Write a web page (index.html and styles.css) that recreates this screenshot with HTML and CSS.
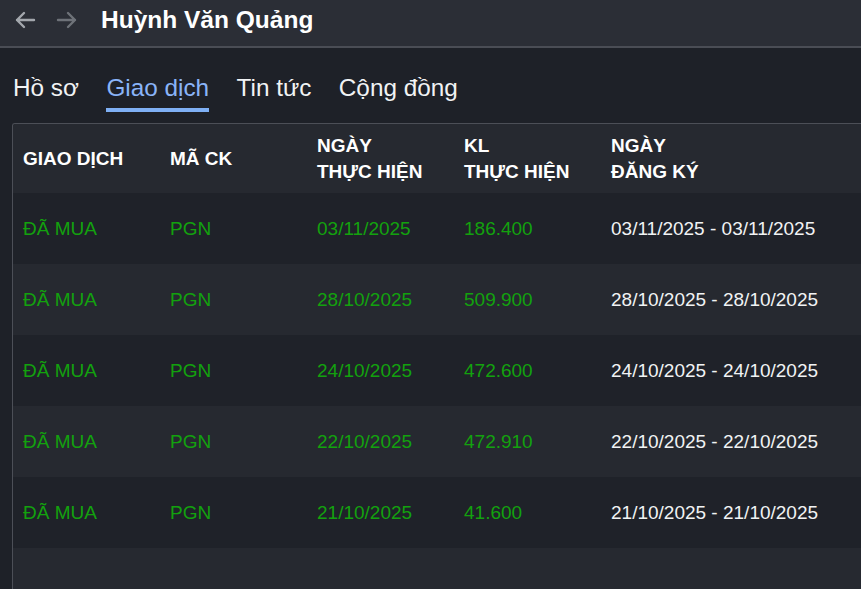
FILE: index.html
```html
<!DOCTYPE html>
<html lang="vi">
<head>
<meta charset="utf-8">
<title>Huỳnh Văn Quảng</title>
<link rel="stylesheet" href="styles.css">
</head>
<body>
<header class="topbar">
  <button class="nav-btn back" aria-label="Quay lại">
    <svg width="22" height="18" viewBox="0 0 22 18"><path d="M20 9H3M10 2L3 9l7 7" fill="none" stroke="currentColor" stroke-width="2.4" stroke-linecap="round" stroke-linejoin="round"/></svg>
  </button>
  <button class="nav-btn fwd" aria-label="Tiếp">
    <svg width="22" height="18" viewBox="0 0 22 18"><path d="M2 9h17M12 2l7 7-7 7" fill="none" stroke="currentColor" stroke-width="2.4" stroke-linecap="round" stroke-linejoin="round"/></svg>
  </button>
  <h1 class="title">Huỳnh Văn Quảng</h1>
</header>
<nav class="tabs">
  <a class="tab">Hồ sơ</a>
  <a class="tab active">Giao dịch</a>
  <a class="tab">Tin tức</a>
  <a class="tab">Cộng đồng</a>
</nav>
<section class="table-wrap">
  <table class="trades">
    <thead>
      <tr>
        <th>GIAO DỊCH</th>
        <th>MÃ CK</th>
        <th>NGÀY<br>THỰC HIỆN</th>
        <th>KL<br>THỰC HIỆN</th>
        <th>NGÀY<br>ĐĂNG KÝ</th>
      </tr>
    </thead>
    <tbody>
      <tr><td class="g">ĐÃ MUA</td><td class="g">PGN</td><td class="g">03/11/2025</td><td class="g">186.400</td><td>03/11/2025 - 03/11/2025</td></tr>
      <tr><td class="g">ĐÃ MUA</td><td class="g">PGN</td><td class="g">28/10/2025</td><td class="g">509.900</td><td>28/10/2025 - 28/10/2025</td></tr>
      <tr><td class="g">ĐÃ MUA</td><td class="g">PGN</td><td class="g">24/10/2025</td><td class="g">472.600</td><td>24/10/2025 - 24/10/2025</td></tr>
      <tr><td class="g">ĐÃ MUA</td><td class="g">PGN</td><td class="g">22/10/2025</td><td class="g">472.910</td><td>22/10/2025 - 22/10/2025</td></tr>
      <tr><td class="g">ĐÃ MUA</td><td class="g">PGN</td><td class="g">21/10/2025</td><td class="g">41.600</td><td>21/10/2025 - 21/10/2025</td></tr>
    </tbody>
  </table>
</section>
</body>
</html>
```
FILE: styles.css
```css
html, body {
  margin: 0;
  padding: 0;
  height: 100%;
  overflow: hidden;
}
body {
  background: #1e2128;
  color: #f1f3f4;
  font-family: "Liberation Sans", Arial, sans-serif;
  display: flex;
  flex-direction: column;
}
.topbar {
  height: 46px;
  flex: none;
  background: #2b2e36;
  border-bottom: 2px solid #4a4d55;
  display: flex;
  align-items: center;
  padding-left: 14px;
}
.nav-btn {
  background: none;
  border: 0;
  padding: 0;
  width: 22px;
  height: 18px;
  display: flex;
  margin-right: 20px;
  margin-top: -6px;
}
.nav-btn.back { color: #a3a7ad; }
.nav-btn.fwd { color: #6e7279; }
.title {
  margin: -6px 0 0 3px;
  font-size: 24.5px;
  font-weight: bold;
  color: #ffffff;
}
.tabs {
  flex: none;
  display: flex;
  gap: 27.5px;
  padding: 26px 13px 0;
  height: 49px;
}
.tab {
  font-size: 24.3px;
  color: #f1f3f4;
  line-height: 28px;
  height: 34px;
  border-bottom: 4px solid transparent;
}
.tab.active {
  color: #8ab4f8;
  border-bottom-color: #7fb0f5;
}
.table-wrap {
  flex: 1;
  margin-left: 12px;
  border-left: 1px solid #4c4f57;
  border-top: 1px solid #4c4f57;
  border-top-left-radius: 3px;
  background: #262930;
  overflow: hidden;
}
.trades {
  border-collapse: collapse;
  width: 100%;
}
.trades th, .trades td {
  text-align: left;
  padding: 0 10px;
  font-size: 19px;
  width: 127px;
  vertical-align: middle;
  white-space: nowrap;
}
.trades th:last-child, .trades td:last-child {
  width: auto;
}
.trades th {
  height: 69px;
  font-weight: bold;
  line-height: 26px;
  color: #ffffff;
  background: #262930;
}
.trades td {
  height: 71px;
  color: #f1f3f4;
}
.trades tbody tr:nth-child(odd) td {
  background: #1f2229;
}
.trades tbody tr:nth-child(even) td {
  background: #262930;
}
.trades td.g {
  color: #13a10e;
}
```
